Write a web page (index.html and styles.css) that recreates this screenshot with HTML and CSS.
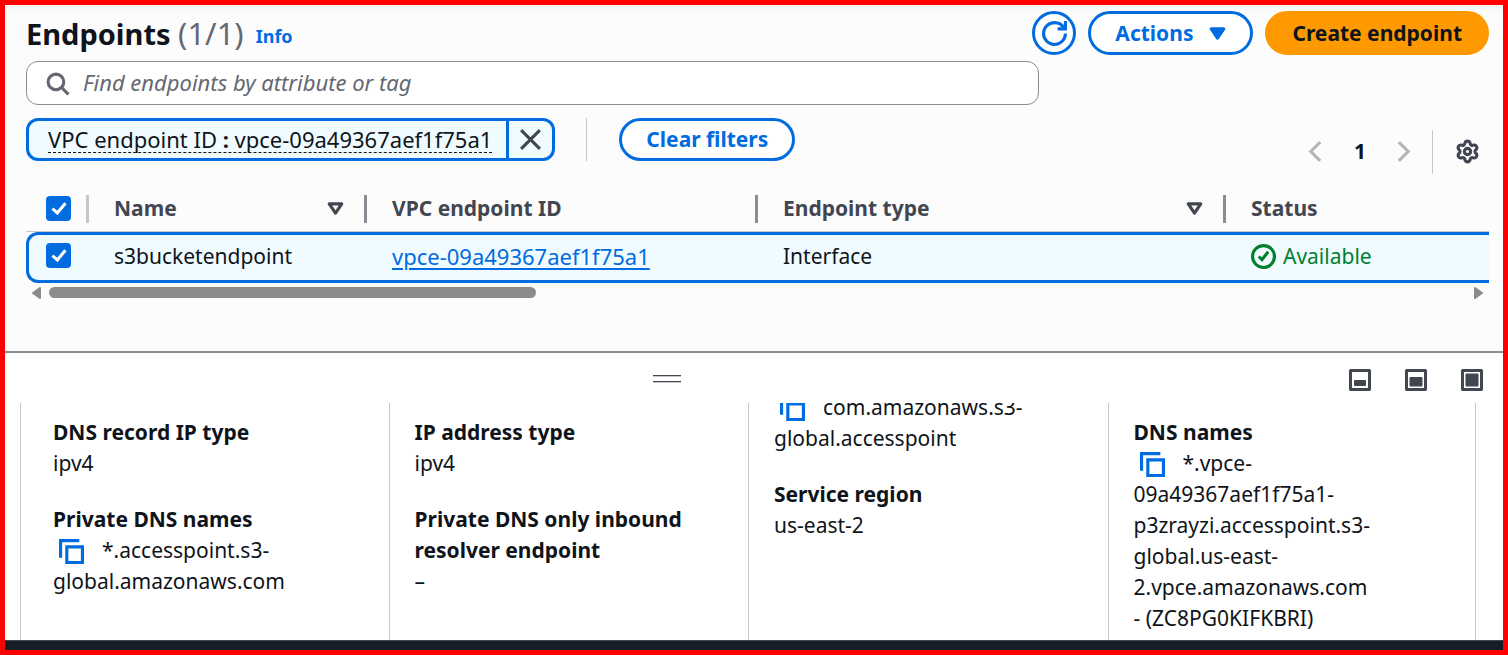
FILE: index.html
```html
<!DOCTYPE html>
<html lang="en">
<head>
<meta charset="utf-8">
<title>Endpoints</title>
<link rel="stylesheet" href="styles.css">
</head>
<body>
<div class="frame">
  <main class="list">
    <header class="list-header">
      <h1 class="title">Endpoints <span class="counter">(1/1)</span></h1>
      <a class="info" href="#">Info</a>
      <div class="actions">
        <button class="btn btn-icon" type="button" aria-label="Refresh">
          <svg class="icon" viewBox="0 0 16 16"><path d="M15 8c0 3.87-3.13 7-7 7s-7-3.13-7-7 3.13-7 7-7c2.79 0 5.2 1.63 6.33 4"/><path d="M10 5h5V0"/></svg>
        </button>
        <button class="btn btn-menu" type="button">Actions
          <svg class="icon icon-solid" viewBox="0 0 16 16"><path d="M4 5h8l-4 6z"/></svg>
        </button>
        <button class="btn btn-primary" type="button">Create endpoint</button>
      </div>
    </header>

    <div class="toolbar">
      <div class="filters">
        <label class="search">
          <svg class="icon" viewBox="0 0 16 16"><circle cx="7" cy="7" r="5"/><path d="M15 15l-4.500-4.500"/></svg>
          <input class="search-input" type="search" aria-label="Find endpoints" placeholder="Find endpoints by attribute or tag">
        </label>
        <div class="tokens">
          <div class="token">
            <button class="token-label" type="button"><span class="token-text">VPC endpoint ID <b>:</b> vpce-09a49367aef1f75a1</span></button>
            <button class="token-close" type="button" aria-label="Remove filter">
              <svg class="icon" viewBox="0 0 16 16"><path d="M2 2l12 12M14 2L2 14"/></svg>
            </button>
          </div>
          <span class="rule"></span>
          <button class="btn" type="button">Clear filters</button>
        </div>
      </div>
      <nav class="pager" aria-label="Pagination">
        <button class="plain muted" type="button" aria-label="Previous page"><svg class="icon" viewBox="0 0 16 16"><path d="M11 2L5 8l6 6"/></svg></button>
        <button class="plain page" type="button">1</button>
        <button class="plain muted" type="button" aria-label="Next page"><svg class="icon" viewBox="0 0 16 16"><path d="M5 2l6 6-6 6"/></svg></button>
        <span class="rule rule-pager"></span>
        <button class="plain" type="button" aria-label="Preferences"><svg class="icon" viewBox="0 0 16 16"><path d="M6.36 2.64A1.7 1.7 0 0 1 9.64 2.64A1.5 1.5 0 0 0 11.82 3.9A1.7 1.7 0 0 1 13.46 6.74A1.5 1.5 0 0 0 13.46 9.26A1.7 1.7 0 0 1 11.82 12.1A1.5 1.5 0 0 0 9.64 13.36A1.7 1.7 0 0 1 6.36 13.36A1.5 1.5 0 0 0 4.18 12.1A1.7 1.7 0 0 1 2.54 9.26A1.5 1.5 0 0 0 2.54 6.74A1.7 1.7 0 0 1 4.18 3.9A1.5 1.5 0 0 0 6.36 2.64Z"/><circle cx="8" cy="8" r="2"/></svg></button>
      </nav>
    </div>

    <div class="table-wrap">
      <table class="grid">
        <colgroup><col class="c-check"><col class="c-name"><col class="c-id"><col class="c-type"><col></colgroup>
        <thead>
          <tr>
            <th><div class="head head-check"><input class="check" type="checkbox" checked aria-label="Select all"></div></th>
            <th><div class="head">Name <svg class="icon sort" viewBox="0 0 16 16"><path d="M4 5h8l-4 6z"/></svg></div></th>
            <th><div class="head">VPC endpoint ID</div></th>
            <th><div class="head">Endpoint type <svg class="icon sort" viewBox="0 0 16 16"><path d="M4 5h8l-4 6z"/></svg></div></th>
            <th><div class="head">Status</div></th>
          </tr>
        </thead>
        <tbody>
          <tr>
            <td><input class="check" type="checkbox" checked aria-label="Select s3bucketendpoint"></td>
            <td>s3bucketendpoint</td>
            <td><a class="link" href="#">vpce-09a49367aef1f75a1</a></td>
            <td>Interface</td>
            <td><span class="status"><svg class="icon" viewBox="0 0 16 16"><circle cx="8" cy="8" r="7"/><path d="M5 8l2 2 4-5"/></svg>Available</span></td>
          </tr>
        </tbody>
      </table>
    </div>
    <div class="scrollbar">
      <svg class="arrow" viewBox="0 0 9 12"><path d="M8 1v10L1 6z"/></svg>
      <div class="track"><div class="thumb"></div></div>
      <svg class="arrow" viewBox="0 0 9 12"><path d="M1 1v10l7-5z"/></svg>
    </div>
  </main>

  <section class="panel">
    <div class="panel-bar">
      <button class="handle" type="button" aria-label="Resize panel"></button>
      <div class="sizes">
        <button class="plain" type="button" aria-label="Small panel"><svg class="size-icon" viewBox="0 0 22 22"><path class="box" d="M1.500 1.500h19v19h-19z"/><rect x="5" y="11" width="12" height="6" rx="1"/></svg></button>
        <button class="plain" type="button" aria-label="Medium panel"><svg class="size-icon" viewBox="0 0 22 22"><path class="box" d="M1.500 1.500h19v19h-19z"/><rect x="4.500" y="8" width="13" height="9.500" rx="1"/></svg></button>
        <button class="plain" type="button" aria-label="Full panel"><svg class="size-icon" viewBox="0 0 22 22"><path class="box" d="M1.500 1.500h19v19h-19z"/><rect x="4.500" y="4.500" width="13" height="13" rx="1"/></svg></button>
      </div>
    </div>
    <div class="details">
      <div class="column">
        <dl class="pair"><dt>DNS record IP type</dt><dd>ipv4</dd></dl>
        <dl class="pair"><dt>Private DNS names</dt><dd><button class="copy" type="button" aria-label="Copy"><svg class="icon" viewBox="0 0 16 16"><path d="M1 12V1h12M5 5h10v10H5z"/></svg></button>*.accesspoint.s3-<br>global.amazonaws.com</dd></dl>
      </div>
      <div class="column">
        <dl class="pair"><dt>IP address type</dt><dd>ipv4</dd></dl>
        <dl class="pair"><dt>Private DNS only inbound resolver endpoint</dt><dd>–</dd></dl>
      </div>
      <div class="column column-scrolled">
        <dl class="pair"><dd><button class="copy" type="button" aria-label="Copy"><svg class="icon" viewBox="0 0 16 16"><path d="M1 12V1h12M5 5h10v10H5z"/></svg></button>com.amazonaws.s3-<br>global.accesspoint</dd></dl>
        <dl class="pair"><dt>Service region</dt><dd>us-east-2</dd></dl>
      </div>
      <div class="column">
        <dl class="pair"><dt>DNS names</dt><dd><button class="copy" type="button" aria-label="Copy"><svg class="icon" viewBox="0 0 16 16"><path d="M1 12V1h12M5 5h10v10H5z"/></svg></button>*.vpce-<br>09a49367aef1f75a1-<br>p3zrayzi.accesspoint.s3-<br>global.us-east-<br>2.vpce.amazonaws.com<br>- (ZC8PG0KIFKBRI)</dd></dl>
      </div>
    </div>
  </section>
  <footer class="footer"></footer>
</div>
</body>
</html>
```

FILE: styles.css
```css
* { box-sizing: border-box; }

body {
  margin: 0;
  font: 21px/31px "Noto Sans", "Open Sans", sans-serif;
  color: #0f141a;
  background: #fff;
}

button, input { font: inherit; color: inherit; }
button { cursor: pointer; }

.frame {
  display: flex;
  flex-direction: column;
  min-height: 100vh;
  border: 5px solid #f00;
}

.icon {
  display: block;
  flex: none;
  width: 25px;
  height: 25px;
  fill: none;
  stroke: currentColor;
  stroke-width: 2;
}
.icon-solid { fill: currentColor; stroke-linejoin: round; }

/* List */
.list {
  padding: 6px 14px 52px 21px;
  background: linear-gradient(#f4f4f5, #fcfcfd 8px);
  border-bottom: 2px solid #8c8c94;
}

.list-header { display: flex; align-items: center; }
.title { margin: 0; font-size: 29px; line-height: 42px; font-weight: 700; }
.counter { font-size: 31px; font-weight: 400; color: #656871; }
.info {
  margin: 6px 0 0 12px;
  font-size: 18px;
  font-weight: 700;
  color: #006ce0;
  text-decoration: none;
}
.actions { display: flex; gap: 12px; margin-left: auto; }

.btn {
  display: flex;
  align-items: center;
  gap: 12px;
  height: 44px;
  padding: 0 24px;
  border: 3px solid #006ce0;
  border-radius: 22px;
  background: #fff;
  color: #006ce0;
  font-weight: 700;
  white-space: nowrap;
}
.btn-icon { width: 44px; padding: 0; justify-content: center; }
.btn-menu { padding-right: 20px; }
.btn-primary { border-color: #ff9900; background: #ff9900; color: #0f141a; }

.toolbar { display: grid; grid-template-columns: 9fr 4fr; margin-top: 6px; }
.search {
  display: flex;
  align-items: center;
  gap: 13px;
  height: 44px;
  padding: 0 18px;
  border: 1px solid #8c8c94;
  border-radius: 12px;
  background: #fff;
  color: #656871;
  font-size: 22px;
}
.search-input {
  flex: 1;
  min-width: 0;
  padding: 0 0 2px;
  border: 0;
  outline: 0;
  background: none;
}
.search-input::placeholder { color: #656871; font-style: italic; opacity: 1; }

.tokens { display: flex; align-items: center; margin-top: 13px; }
.tokens .btn { height: 43px; }
.token {
  display: flex;
  height: 43px;
  border: 3px solid #006ce0;
  border-radius: 12px;
  background: #f0fbff;
  font-size: 22px;
  overflow: hidden;
}
.token-label { padding: 0 14px 0 19px; border: 0; background: none; white-space: nowrap; }
.token-text { display: block; line-height: 26px; border-bottom: 1px dashed #0f141a; }
.token-close {
  display: flex;
  align-items: center;
  padding: 0 9px;
  border: 0;
  border-left: 3px solid #006ce0;
  background: none;
  color: #424650;
}
.rule { width: 1px; height: 43px; margin: 0 32px 0 31px; background: #c6c6cd; }

.pager { display: flex; align-items: flex-end; justify-content: flex-end; height: 113px; }
.pager .plain { display: flex; align-items: center; justify-content: center; height: 44px; padding-bottom: 2px; }
.plain { padding: 0; border: 0; background: none; color: #424650; }
.pager .muted { width: 44px; color: #b4b4bb; }
.pager .page { width: 44px; color: #0f141a; font-weight: 700; }
.rule-pager { height: 44px; margin: 0 22px 0 6px; }
.pager .plain:last-child { margin-right: 9px; }

/* Table */
.table-wrap { margin-top: 13px; overflow: hidden; }
.grid { width: 100%; table-layout: fixed; border-collapse: separate; border-spacing: 0; }
.c-check { width: 63px; }
.c-name { width: 278px; }
.c-id { width: 391px; }
.c-type { width: 468px; }
.grid th {
  height: 45px;
  padding: 0;
  border-bottom: 1px solid #c6c6cd;
  color: #424650;
  font-weight: 700;
  text-align: left;
}
.head {
  display: flex;
  align-items: center;
  justify-content: space-between;
  height: 28px;
  padding: 0 16px 2px 25px;
  border-right: 3px solid #8c8c94;
}
.head-check { padding-left: 20px; border-right-color: #c6c6cd; }
.grid th:last-child .head { border-right: 0; }
.sort { stroke-linejoin: round; }
.grid td {
  height: 51px;
  padding: 0 0 2px 25px;
  border: 0 solid #006ce0;
  border-width: 3px 0;
  background: #f0fbff;
}
.grid td:first-child {
  padding: 0 0 4px 17px;
  border-left-width: 3px;
  border-radius: 12px 0 0 12px;
}
.check {
  display: block;
  flex: none;
  appearance: none;
  width: 25px;
  height: 25px;
  margin: 0;
  border-radius: 4px;
  background: #006ce0;
}
.check::after {
  content: "";
  display: block;
  width: 5px;
  height: 11px;
  margin: 4px auto 0;
  border: solid #fff;
  border-width: 0 3px 3px 0;
  transform: rotate(40deg);
}
.link { font-size: 22px; color: #006ce0; text-decoration-thickness: 2px; text-underline-offset: 3px; }
.status { display: flex; align-items: center; gap: 7px; color: #00802f; }

.scrollbar { display: flex; align-items: center; gap: 8px; height: 16px; padding: 3px 6px 0; }
.arrow { width: 9px; height: 12px; fill: #8b8b8b; stroke: #8b8b8b; stroke-width: 2; stroke-linejoin: round; }
.track { flex: 1; }
.thumb { width: 34.4%; height: 11px; border-radius: 6px; background: #8b8b8b; }

/* Details panel */
.panel { display: flex; flex: 1; flex-direction: column; background: #fff; }
.panel-bar { display: flex; height: 50px; padding: 0 20px 0 0; }
.handle {
  width: 28px;
  height: 7px;
  margin: 22px auto 0;
  padding: 0;
  border: solid #424650;
  border-width: 1px 0;
  background: none;
  box-shadow: 0 1px #c6c6cd, inset 0 1px #c6c6cd;
}
.sizes { display: flex; gap: 34px; padding: 16px 0 0 20px; }
.sizes .plain { height: 22px; }
.size-icon { display: block; width: 22px; height: 22px; fill: #424650; }
.box { fill: none; stroke: #424650; stroke-width: 3; stroke-linejoin: round; }

.details {
  display: grid;
  flex: 1;
  grid-template-columns: repeat(4, 1fr);
  margin: 0 27px 0 15px;
  padding: 0 8px;
  border: solid #c6c6cd;
  border-width: 0 1px;
  overflow: hidden;
}
.column {
  display: flex;
  flex-direction: column;
  gap: 25px;
  padding: 14px 24px 5px 25px;
  border-left: 1px solid #c6c6cd;
}
.column:first-child { border-left-color: transparent; padding-left: 23px; }
.column-scrolled { padding-top: 0; }
.column-scrolled .pair:first-child { margin-top: -11px; }
.pair { margin: 0; }
.pair dt { font-weight: 700; }
.pair dd { margin: 0; }
.copy {
  display: inline-block;
  margin: 0 18px 0 6px;
  padding: 0;
  border: 0;
  background: none;
  color: #006ce0;
  line-height: 0;
  vertical-align: -6px;
}

.footer { height: 10px; border-top: 1px solid #424650; background: #161d26; }
```
